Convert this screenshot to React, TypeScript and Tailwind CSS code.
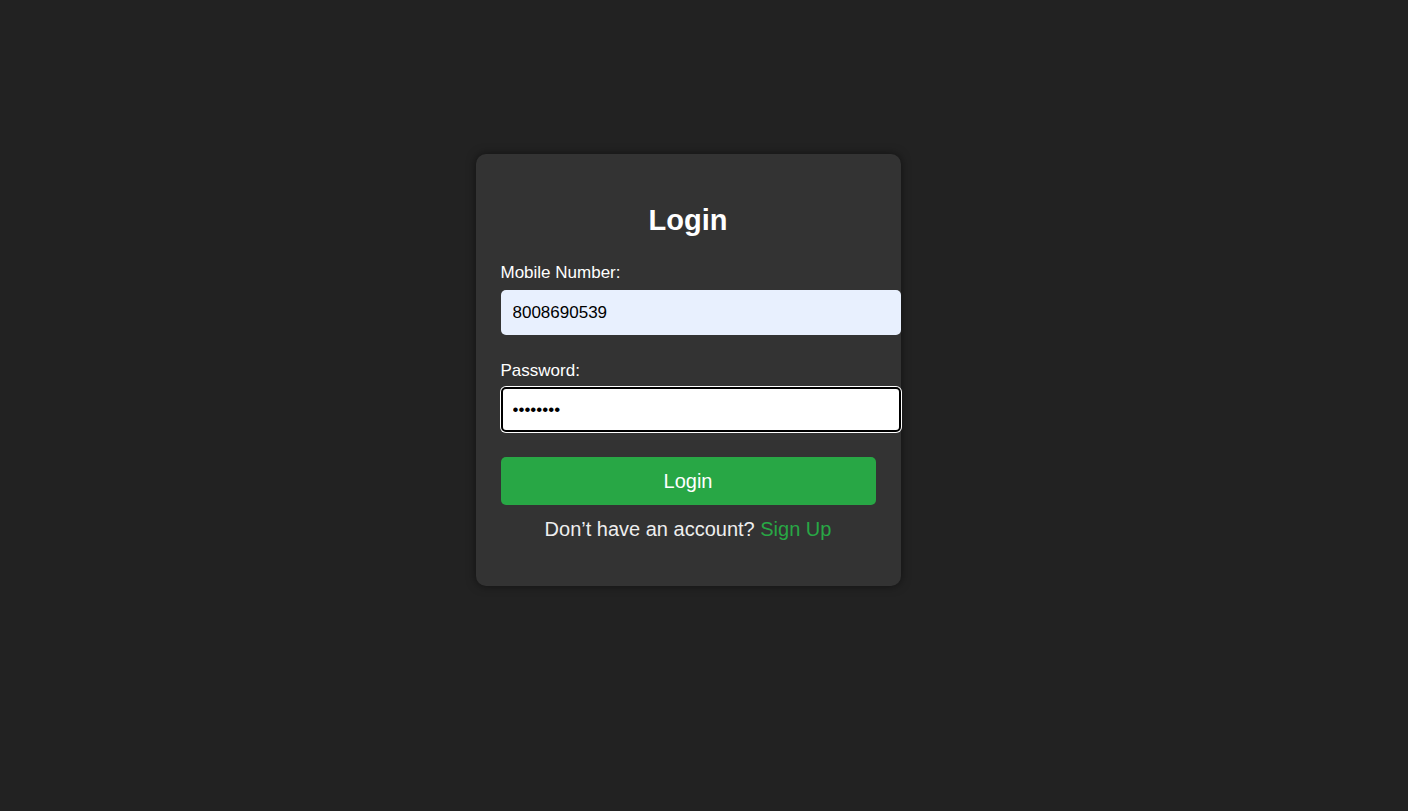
import { useState } from 'react';

const FONT = "font-['Liberation_Sans',Arial,sans-serif]";

export default function App() {
  const [mobile, setMobile] = useState('8008690539');
  const [password, setPassword] = useState('password');

  return (
    <div className={`min-h-screen w-full bg-[#222222] flex justify-center pt-[154px] pr-[32px] ${FONT}`}>
      <div className="w-[425px] h-[432px] bg-[#333333] rounded-[10px] shadow-[0_0_10px_rgba(0,0,0,0.5)] px-[25px] pt-[25px]">
        <h2 className="mt-[24px] mb-[26px] text-center text-white font-bold text-[29px] leading-[34px]">
          Login
        </h2>

        <form onSubmit={(e) => e.preventDefault()}>
          <label htmlFor="mobile" className="block text-white text-[17px] leading-[20px] mb-[7px]">
            Mobile Number:
          </label>
          <input
            id="mobile"
            type="text"
            value={mobile}
            onChange={(e) => setMobile(e.target.value)}
            className="block w-[400px] h-[45px] px-[12px] rounded-[5px] bg-[#e8f0fe] text-black text-[17px] outline-none"
          />

          <label htmlFor="password" className="block text-white text-[17px] leading-[20px] mt-[26px] mb-[6px]">
            Password:
          </label>
          <input
            id="password"
            type="password"
            autoFocus
            value={password}
            onChange={(e) => setPassword(e.target.value)}
            className="block w-[400px] h-[45px] px-[10px] rounded-[5px] bg-white text-black text-[17px] border-2 border-black shadow-[0_0_0_1px_#ffffff] outline-none caret-black"
          />

          <button
            type="submit"
            className="block w-[375px] h-[48px] mt-[25px] rounded-[5px] bg-[#28a745] text-white text-[20px]"
          >
            Login
          </button>
        </form>

        <p className="mt-[13px] text-center text-[#eeeeee] text-[20px] leading-[23px]">
          Don’t have an account? <a href="#" className="text-[#28a745]">Sign Up</a>
        </p>
      </div>
    </div>
  );
}
